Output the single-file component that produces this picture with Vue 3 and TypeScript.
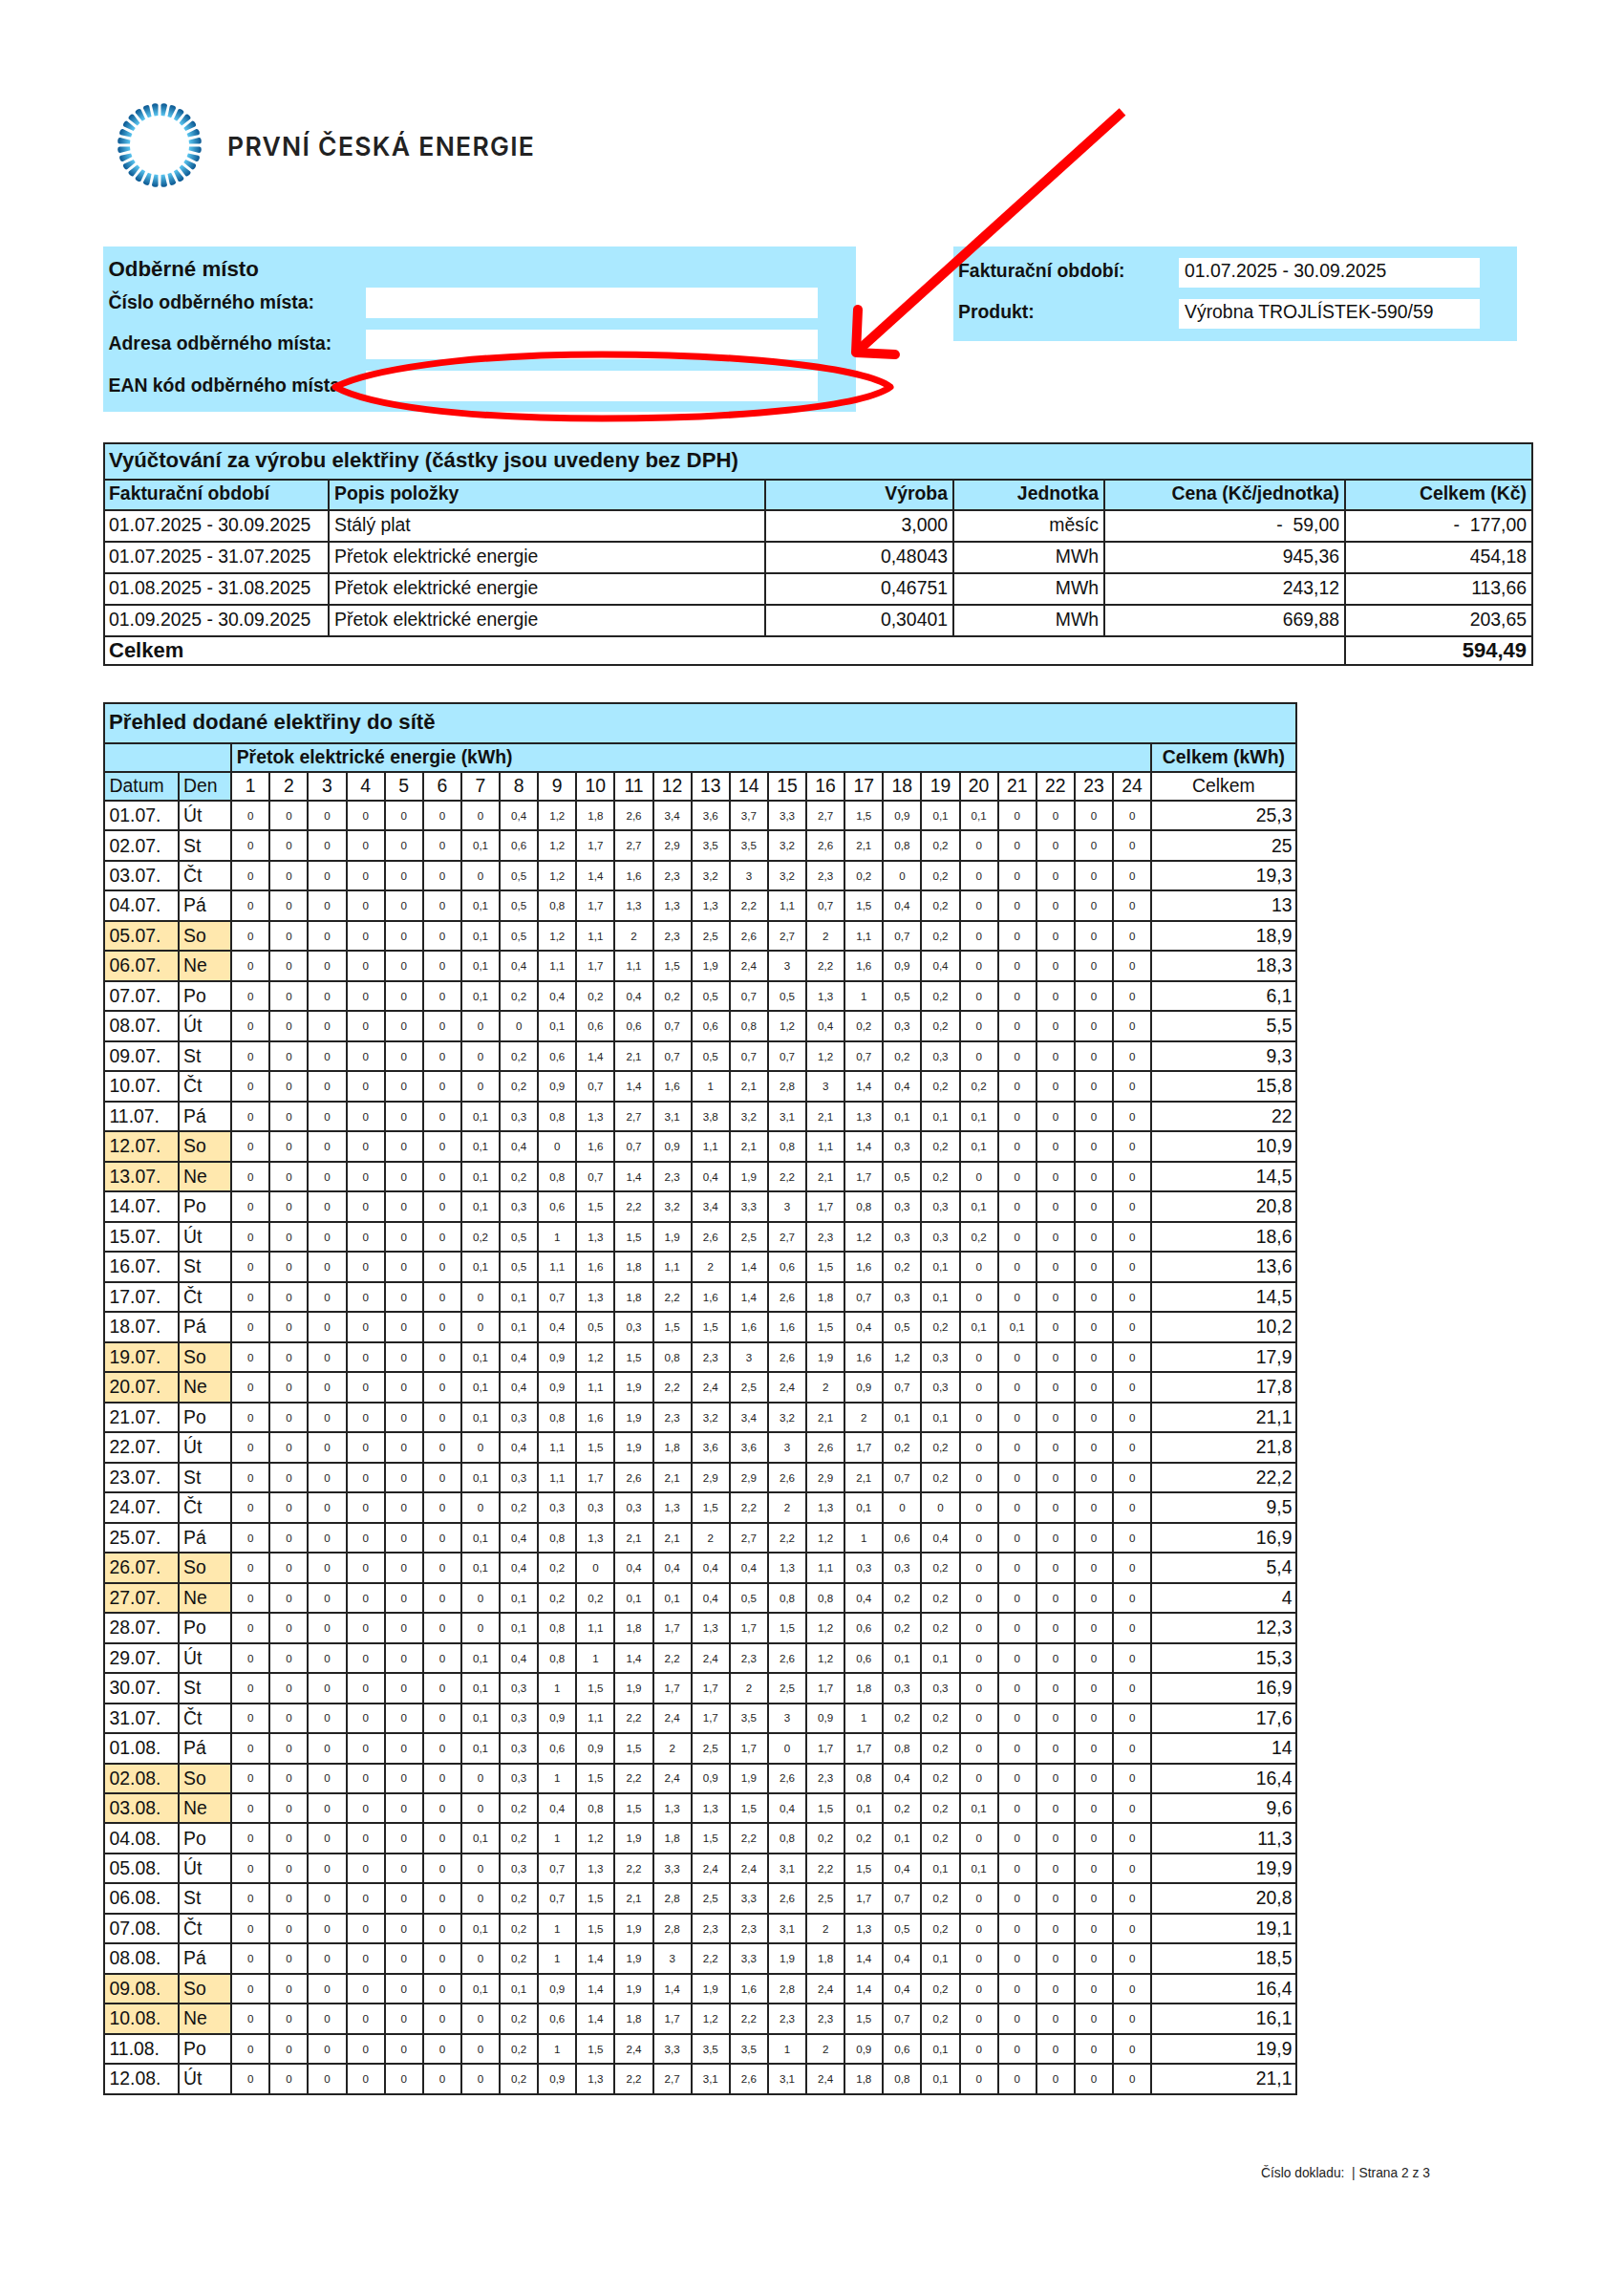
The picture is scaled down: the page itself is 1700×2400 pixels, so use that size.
<template>
  <div class="page">
    <header class="logo">
      <svg class="logo-mark" viewBox="-44 -44 88 88" width="88" height="88">
        <defs>
          <radialGradient id="dash" gradientUnits="userSpaceOnUse" cx="0" cy="0" r="44">
            <stop offset="0.7" stop-color="#5cc8f2" />
            <stop offset="1" stop-color="#0a5690" />
          </radialGradient>
        </defs>
        <path
          v-for="a in dashAngles"
          :key="a"
          d="M-1.9,-31 L-3.3,-41.8 Q-3.3,-44 0,-44 Q3.3,-44 3.3,-41.8 L1.9,-31 Z"
          fill="url(#dash)"
          :transform="`rotate(${a})`"
        />
      </svg>
      <span class="logo-text">PRVNÍ ČESKÁ ENERGIE</span>
    </header>

    <section class="info">
      <div class="box place">
        <h2>Odběrné místo</h2>
        <div class="fields">
          <label>Číslo odběrného místa:</label>
          <div class="field"></div>
          <label>Adresa odběrného místa:</label>
          <div class="field"></div>
          <label>EAN kód odběrného místa:</label>
          <div class="field"></div>
        </div>
      </div>
      <div class="box period">
        <label>Fakturační období:</label>
        <div class="field">01.07.2025 - 30.09.2025</div>
        <label>Produkt:</label>
        <div class="field">Výrobna TROJLÍSTEK-590/59</div>
      </div>
    </section>

    <table class="bill">
      <colgroup>
        <col style="width: 235px" />
        <col style="width: 457px" />
        <col style="width: 197px" />
        <col style="width: 158px" />
        <col style="width: 252px" />
        <col style="width: 196px" />
      </colgroup>
      <tbody>
        <tr class="title-row">
          <td colspan="6">Vyúčtování za výrobu elektřiny (částky jsou uvedeny bez DPH)</td>
        </tr>
        <tr class="head-row">
          <th>Fakturační období</th>
          <th>Popis položky</th>
          <th class="num">Výroba</th>
          <th class="num">Jednotka</th>
          <th class="num">Cena (Kč/jednotka)</th>
          <th class="num">Celkem (Kč)</th>
        </tr>
        <tr v-for="item in billItems" :key="item.period + item.amount" class="item-row">
          <td>{{ item.period }}</td>
          <td>{{ item.name }}</td>
          <td class="num">{{ item.amount }}</td>
          <td class="num">{{ item.unit }}</td>
          <td class="num">{{ item.price }}</td>
          <td class="num">{{ item.total }}</td>
        </tr>
        <tr class="sum-row">
          <td colspan="5">Celkem</td>
          <td class="num">594,49</td>
        </tr>
      </tbody>
    </table>

    <table class="daily">
      <colgroup>
        <col style="width: 77.5px" />
        <col style="width: 55.7px" />
        <col v-for="h in hours" :key="h" style="width: 40.14px" />
        <col style="width: 151px" />
      </colgroup>
      <tbody>
        <tr class="daily-title">
          <td :colspan="27">Přehled dodané elektřiny do sítě</td>
        </tr>
        <tr class="daily-head">
          <th colspan="2"></th>
          <th colspan="24" class="left">Přetok elektrické energie (kWh)</th>
          <th>Celkem (kWh)</th>
        </tr>
        <tr class="daily-cols">
          <td class="blue left">Datum</td>
          <td class="blue left">Den</td>
          <td v-for="h in hours" :key="h">{{ h }}</td>
          <td>Celkem</td>
        </tr>
        <tr v-for="row in rows" :key="row.date" class="day-row">
          <td class="left" :class="{ weekend: row.weekend }">{{ row.date }}</td>
          <td class="left" :class="{ weekend: row.weekend }">{{ row.day }}</td>
          <td v-for="(v, i) in row.values" :key="i" class="small">{{ v }}</td>
          <td class="right">{{ row.total }}</td>
        </tr>
      </tbody>
    </table>

    <footer class="foot">Číslo dokladu: &nbsp;| Strana 2 z 3</footer>

    <svg class="marks" viewBox="0 0 1700 2400" width="1700" height="2400">
      <path d="M1175,117 L897,368" fill="none" stroke="#f00" stroke-width="10" />
      <path
        d="M898,324 L896,369 L937,371"
        fill="none"
        stroke="#f00"
        stroke-width="10"
        stroke-linecap="round"
        stroke-linejoin="round"
      />
      <path
        d="M932,405 C905,385 780,371 630,371 C480,371 385,388 351,405 C385,424 480,438 630,438 C780,438 905,425 932,405 Z"
        fill="none"
        stroke="#f00"
        stroke-width="7"
        stroke-linejoin="round"
      />
    </svg>
  </div>
</template>

<script setup lang="ts">
const dashAngles = Array.from({ length: 28 }, (_, i) => 6.43 + i * (360 / 28))
const hours = Array.from({ length: 24 }, (_, i) => i + 1)

const billItems = [
  { period: '01.07.2025 - 30.09.2025', name: 'Stálý plat', amount: '3,000', unit: 'měsíc', price: '-  59,00', total: '-  177,00' },
  { period: '01.07.2025 - 31.07.2025', name: 'Přetok elektrické energie', amount: '0,48043', unit: 'MWh', price: '945,36', total: '454,18' },
  { period: '01.08.2025 - 31.08.2025', name: 'Přetok elektrické energie', amount: '0,46751', unit: 'MWh', price: '243,12', total: '113,66' },
  { period: '01.09.2025 - 30.09.2025', name: 'Přetok elektrické energie', amount: '0,30401', unit: 'MWh', price: '669,88', total: '203,65' },
]

// date day total | values for hours 7 and up, the rest of the day is zero
const raw = `01.07. Út 25,3 0 0,4 1,2 1,8 2,6 3,4 3,6 3,7 3,3 2,7 1,5 0,9 0,1 0,1
02.07. St 25 0,1 0,6 1,2 1,7 2,7 2,9 3,5 3,5 3,2 2,6 2,1 0,8 0,2
03.07. Čt 19,3 0 0,5 1,2 1,4 1,6 2,3 3,2 3 3,2 2,3 0,2 0 0,2
04.07. Pá 13 0,1 0,5 0,8 1,7 1,3 1,3 1,3 2,2 1,1 0,7 1,5 0,4 0,2
05.07. So 18,9 0,1 0,5 1,2 1,1 2 2,3 2,5 2,6 2,7 2 1,1 0,7 0,2
06.07. Ne 18,3 0,1 0,4 1,1 1,7 1,1 1,5 1,9 2,4 3 2,2 1,6 0,9 0,4
07.07. Po 6,1 0,1 0,2 0,4 0,2 0,4 0,2 0,5 0,7 0,5 1,3 1 0,5 0,2
08.07. Út 5,5 0 0 0,1 0,6 0,6 0,7 0,6 0,8 1,2 0,4 0,2 0,3 0,2
09.07. St 9,3 0 0,2 0,6 1,4 2,1 0,7 0,5 0,7 0,7 1,2 0,7 0,2 0,3
10.07. Čt 15,8 0 0,2 0,9 0,7 1,4 1,6 1 2,1 2,8 3 1,4 0,4 0,2 0,2
11.07. Pá 22 0,1 0,3 0,8 1,3 2,7 3,1 3,8 3,2 3,1 2,1 1,3 0,1 0,1 0,1
12.07. So 10,9 0,1 0,4 0 1,6 0,7 0,9 1,1 2,1 0,8 1,1 1,4 0,3 0,2 0,1
13.07. Ne 14,5 0,1 0,2 0,8 0,7 1,4 2,3 0,4 1,9 2,2 2,1 1,7 0,5 0,2
14.07. Po 20,8 0,1 0,3 0,6 1,5 2,2 3,2 3,4 3,3 3 1,7 0,8 0,3 0,3 0,1
15.07. Út 18,6 0,2 0,5 1 1,3 1,5 1,9 2,6 2,5 2,7 2,3 1,2 0,3 0,3 0,2
16.07. St 13,6 0,1 0,5 1,1 1,6 1,8 1,1 2 1,4 0,6 1,5 1,6 0,2 0,1
17.07. Čt 14,5 0 0,1 0,7 1,3 1,8 2,2 1,6 1,4 2,6 1,8 0,7 0,3 0,1
18.07. Pá 10,2 0 0,1 0,4 0,5 0,3 1,5 1,5 1,6 1,6 1,5 0,4 0,5 0,2 0,1 0,1
19.07. So 17,9 0,1 0,4 0,9 1,2 1,5 0,8 2,3 3 2,6 1,9 1,6 1,2 0,3
20.07. Ne 17,8 0,1 0,4 0,9 1,1 1,9 2,2 2,4 2,5 2,4 2 0,9 0,7 0,3
21.07. Po 21,1 0,1 0,3 0,8 1,6 1,9 2,3 3,2 3,4 3,2 2,1 2 0,1 0,1
22.07. Út 21,8 0 0,4 1,1 1,5 1,9 1,8 3,6 3,6 3 2,6 1,7 0,2 0,2
23.07. St 22,2 0,1 0,3 1,1 1,7 2,6 2,1 2,9 2,9 2,6 2,9 2,1 0,7 0,2
24.07. Čt 9,5 0 0,2 0,3 0,3 0,3 1,3 1,5 2,2 2 1,3 0,1 0 0
25.07. Pá 16,9 0,1 0,4 0,8 1,3 2,1 2,1 2 2,7 2,2 1,2 1 0,6 0,4
26.07. So 5,4 0,1 0,4 0,2 0 0,4 0,4 0,4 0,4 1,3 1,1 0,3 0,3 0,2
27.07. Ne 4 0 0,1 0,2 0,2 0,1 0,1 0,4 0,5 0,8 0,8 0,4 0,2 0,2
28.07. Po 12,3 0 0,1 0,8 1,1 1,8 1,7 1,3 1,7 1,5 1,2 0,6 0,2 0,2
29.07. Út 15,3 0,1 0,4 0,8 1 1,4 2,2 2,4 2,3 2,6 1,2 0,6 0,1 0,1
30.07. St 16,9 0,1 0,3 1 1,5 1,9 1,7 1,7 2 2,5 1,7 1,8 0,3 0,3
31.07. Čt 17,6 0,1 0,3 0,9 1,1 2,2 2,4 1,7 3,5 3 0,9 1 0,2 0,2
01.08. Pá 14 0,1 0,3 0,6 0,9 1,5 2 2,5 1,7 0 1,7 1,7 0,8 0,2
02.08. So 16,4 0 0,3 1 1,5 2,2 2,4 0,9 1,9 2,6 2,3 0,8 0,4 0,2
03.08. Ne 9,6 0 0,2 0,4 0,8 1,5 1,3 1,3 1,5 0,4 1,5 0,1 0,2 0,2 0,1
04.08. Po 11,3 0,1 0,2 1 1,2 1,9 1,8 1,5 2,2 0,8 0,2 0,2 0,1 0,2
05.08. Út 19,9 0 0,3 0,7 1,3 2,2 3,3 2,4 2,4 3,1 2,2 1,5 0,4 0,1 0,1
06.08. St 20,8 0 0,2 0,7 1,5 2,1 2,8 2,5 3,3 2,6 2,5 1,7 0,7 0,2
07.08. Čt 19,1 0,1 0,2 1 1,5 1,9 2,8 2,3 2,3 3,1 2 1,3 0,5 0,2
08.08. Pá 18,5 0 0,2 1 1,4 1,9 3 2,2 3,3 1,9 1,8 1,4 0,4 0,1
09.08. So 16,4 0,1 0,1 0,9 1,4 1,9 1,4 1,9 1,6 2,8 2,4 1,4 0,4 0,2
10.08. Ne 16,1 0 0,2 0,6 1,4 1,8 1,7 1,2 2,2 2,3 2,3 1,5 0,7 0,2
11.08. Po 19,9 0 0,2 1 1,5 2,4 3,3 3,5 3,5 1 2 0,9 0,6 0,1
12.08. Út 21,1 0 0,2 0,9 1,3 2,2 2,7 3,1 2,6 3,1 2,4 1,8 0,8 0,1`

const rows = raw.split('\n').map((line) => {
  const [date, day, total, ...rest] = line.split(' ')
  const values = [...Array(6).fill('0'), ...rest]
  while (values.length < 24) values.push('0')
  return { date, day, total, values, weekend: day === 'So' || day === 'Ne' }
})
</script>

<style>
body {
  background: #fff;
}
</style>

<style scoped>
.page {
  position: relative;
  width: 1700px;
  height: 2400px;
  padding: 108px 0 0 108px;
  box-sizing: border-box;
  background: #fff;
  color: #111;
  font-family: 'Liberation Sans', Arial, sans-serif;
  font-size: 19.4px;
}

.logo {
  display: flex;
  align-items: center;
  gap: 27px;
  height: 88px;
  padding-left: 15px;
  margin-bottom: 62px;
}

.logo-text {
  font-family: Inter, sans-serif;
  font-weight: 600;
  font-size: 26.5px;
  letter-spacing: 1.3px;
  padding-top: 2px;
  color: #222;
  white-space: nowrap;
}

.info {
  display: flex;
  align-items: flex-start;
  gap: 102px;
  margin-bottom: 32px;
}

.box {
  background: #abe9ff;
}

.box label {
  font-weight: 700;
  align-self: center;
  white-space: nowrap;
}

.place label {
  padding-bottom: 1px;
}

.period label {
  padding-bottom: 4px;
}

.field {
  display: flex;
  align-items: center;
  background: #fff;
  padding: 0 0 4px 6px;
  box-sizing: border-box;
}

.place {
  width: 788px;
  height: 173px;
  padding-left: 5.5px;
  box-sizing: border-box;
}

.place h2 {
  margin: 0;
  height: 43px;
  padding-top: 11px;
  box-sizing: border-box;
  font-size: 22.3px;
  line-height: 25px;
  font-weight: 700;
}

.fields {
  display: grid;
  grid-template-columns: 269.5px 473px;
  grid-auto-rows: 31.5px;
  row-gap: 12px;
}

.period {
  display: grid;
  grid-template-columns: 231px 315px;
  grid-auto-rows: 31px;
  row-gap: 12px;
  width: 590px;
  height: 99px;
  padding: 12px 0 0 5px;
  box-sizing: border-box;
}

table {
  border-collapse: collapse;
  table-layout: fixed;
}

td,
th {
  border: 2px solid #222;
  padding: 0 5px 2px 4px;
  line-height: 1;
  font-weight: 400;
  white-space: pre;
  overflow: hidden;
}

.bill {
  width: 1495px;
  margin-bottom: 38px;
}

.bill .title-row td {
  height: 34px;
  background: #abe9ff;
  font-size: 22.2px;
  font-weight: 700;
}

.bill .head-row th {
  height: 28px;
  background: #abe9ff;
  font-weight: 700;
  text-align: left;
}

.bill .head-row th:nth-child(2),
.bill .item-row td:nth-child(2) {
  padding-left: 5px;
}

.bill .item-row td {
  height: 30px;
  padding-bottom: 1px;
}

.bill .sum-row td {
  height: 28px;
  padding-bottom: 0;
  font-size: 22px;
  font-weight: 700;
}

.bill .num,
.bill th.num {
  text-align: right;
}

.daily {
  width: 1248px;
}

.daily td,
.daily th {
  text-align: center;
  padding: 0;
}

.daily .daily-title td {
  height: 38px;
  padding: 0 0 2px 4px;
  background: #abe9ff;
  font-size: 22.2px;
  font-weight: 700;
  text-align: left;
}

.daily .daily-head th {
  height: 28px;
  background: #abe9ff;
  font-weight: 700;
}

.daily .daily-cols td {
  height: 28px;
}

.daily .blue {
  background: #abe9ff;
}

.daily .day-row td {
  height: 29.49px;
}

.daily .left,
.daily th.left {
  text-align: left;
  padding-left: 4.5px;
}

.daily td.right {
  text-align: right;
  padding-right: 3px;
}

.daily .weekend {
  background: #ffe8ae;
}

.daily td.small {
  font-size: 11.6px;
  color: #222;
}

.foot {
  margin: 74px 0 0 1212px;
  font-size: 13.8px;
  line-height: 16px;
  color: #222;
  white-space: nowrap;
}

.marks {
  position: absolute;
  top: 0;
  left: 0;
  pointer-events: none;
}
</style>
